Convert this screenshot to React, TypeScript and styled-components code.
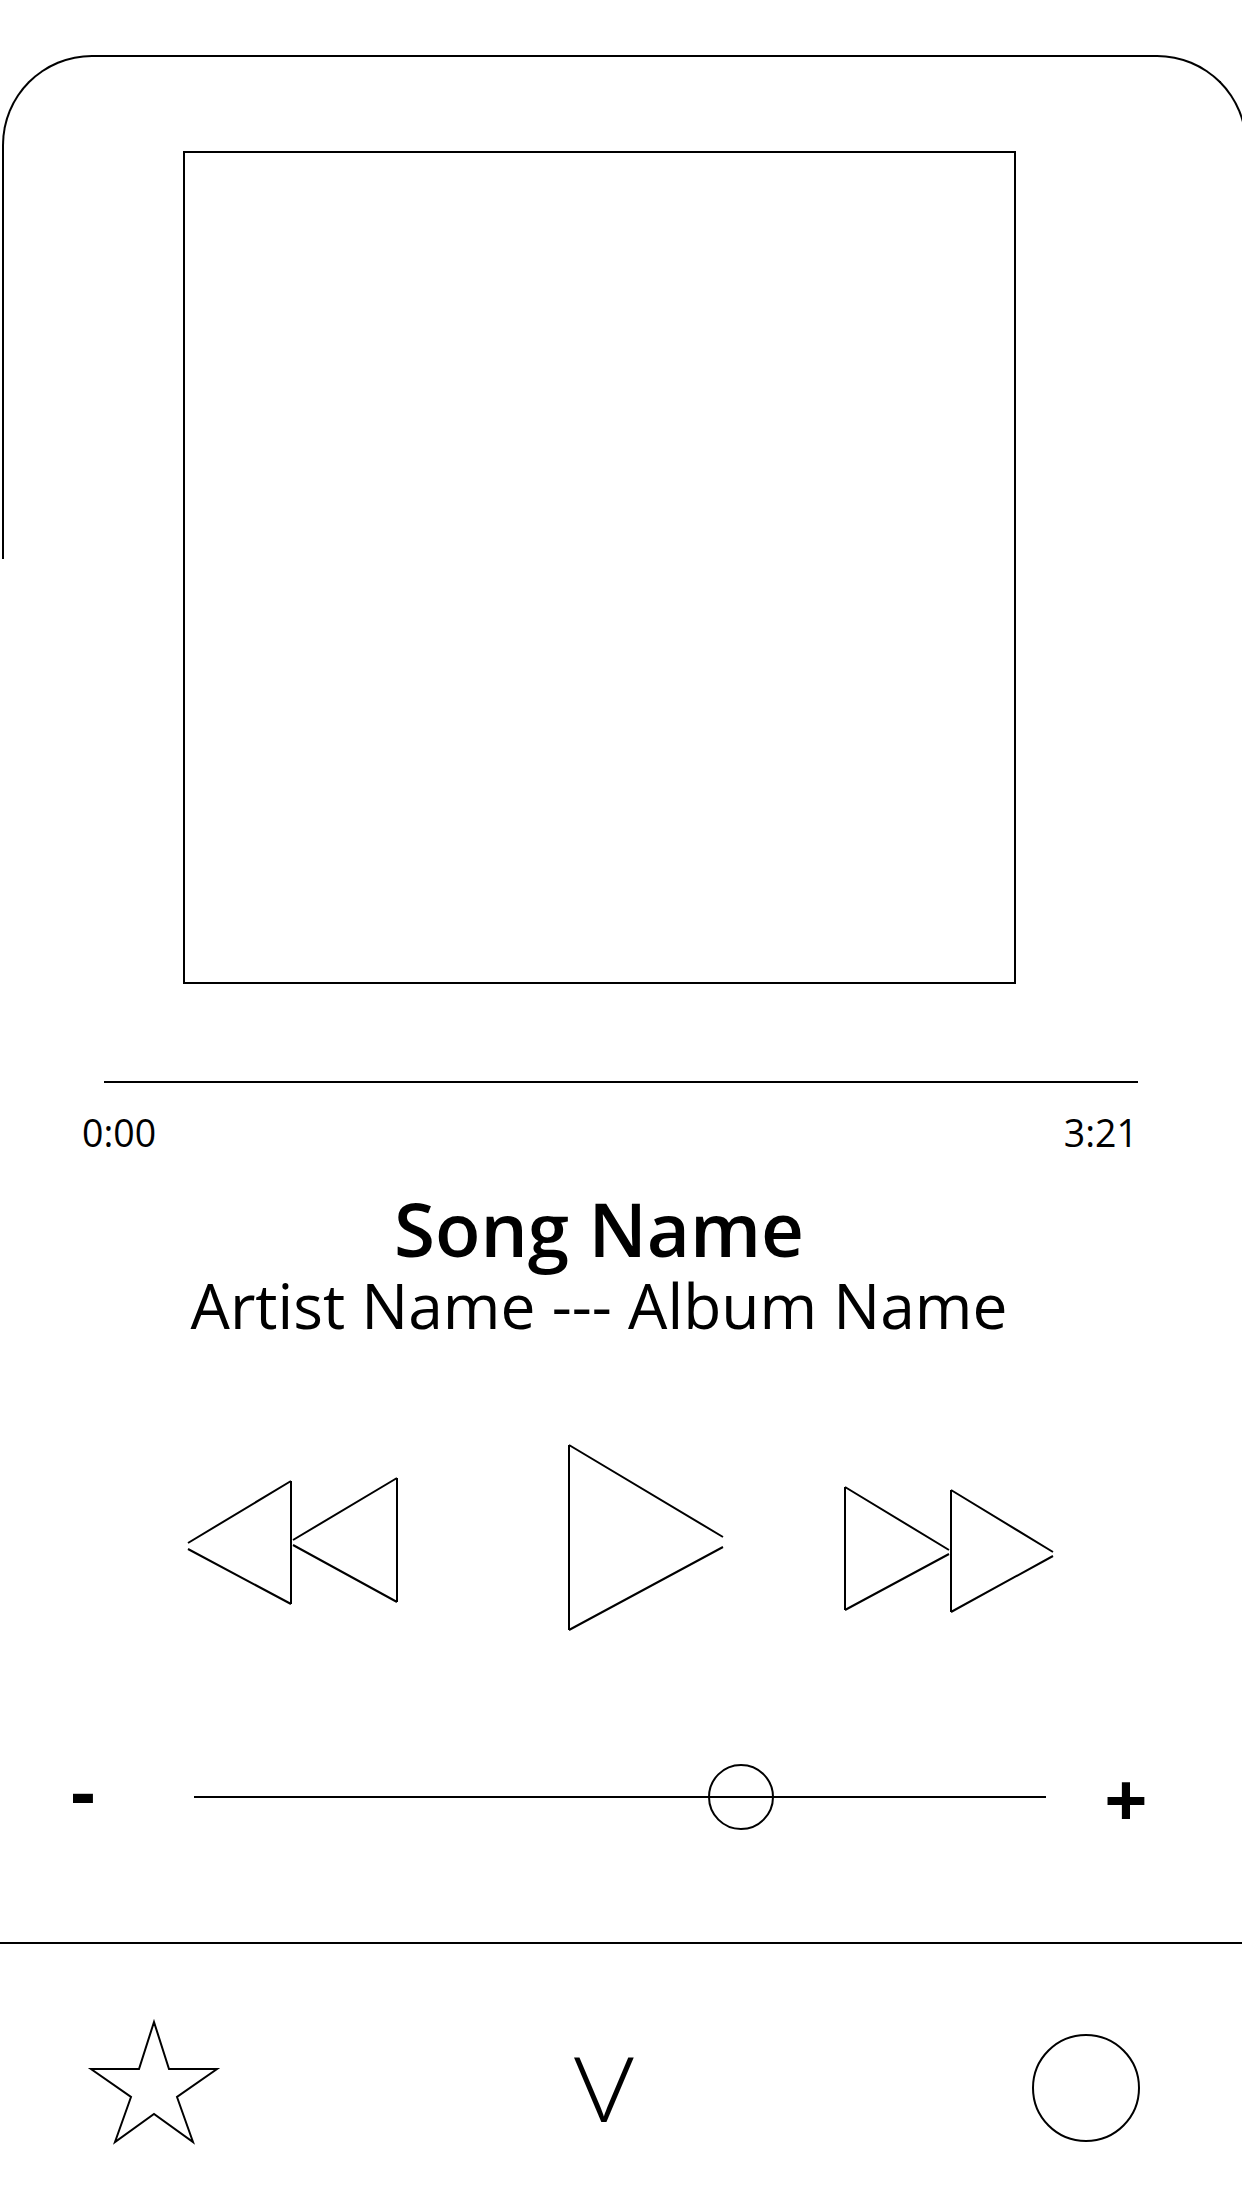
import React from "react";
import styled, { createGlobalStyle } from "styled-components";

const GlobalStyle = createGlobalStyle`
  html, body {
    margin: 0;
    padding: 0;
    background: #ffffff;
    overflow: hidden;
  }
  body {
    font-family: "Open Sans", "Noto Sans", sans-serif;
    color: #000;
  }
`;

const Page = styled.div`
  position: relative;
  width: 1242px;
  height: 2208px;
  overflow: hidden;
  display: flex;
  flex-direction: column;
  background: #fff;

  &::before {
    content: "";
    position: absolute;
    left: 2px;
    top: 55px;
    width: 1245px;
    height: 504px;
    box-sizing: border-box;
    border: 2px solid #000;
    border-bottom: none;
    border-radius: 90px 90px 0 0;
    pointer-events: none;
  }
`;

const AlbumArt = styled.div`
  box-sizing: border-box;
  width: 833px;
  height: 833px;
  margin: 151px 0 0 183px;
  border: 2px solid #000;
  background: #fff;
  position: relative;
`;

const ProgressTrack = styled.div`
  height: 2px;
  margin: 97px 104px 0 104px;
  background: #000;
`;

const TimeRow = styled.div`
  display: flex;
  justify-content: space-between;
  padding: 0 104px 0 82px;
  margin-top: 26px;
  font-size: 37.5px;
  line-height: 48px;
  font-weight: 400;
`;

const Info = styled.div`
  display: flex;
  flex-direction: column;
  align-items: center;
  padding-right: 44px;
  margin-top: 31px;
`;

const SongTitle = styled.div`
  font-size: 74.5px;
  line-height: 80px;
  font-weight: 600;
`;

const Subtitle = styled.div`
  font-size: 62.3px;
  line-height: 73px;
  font-weight: 400;
  white-space: nowrap;
`;

const Controls = styled.div`
  display: flex;
  align-items: flex-start;
  padding-left: 187px;
  margin-top: 104px;
`;

const ControlIcon = styled.svg<{ $top: number; $gap: number }>`
  display: block;
  overflow: visible;
  margin-top: ${(p) => p.$top}px;
  margin-left: ${(p) => p.$gap}px;
  flex: none;
`;

const VolumeRow = styled.div`
  display: flex;
  align-items: center;
  height: 70px;
  margin-top: 132px;
`;

const VolumeSign = styled.div<{ $width: number; $shift: number }>`
  width: ${(p) => p.$width}px;
  flex: none;
  text-align: center;
  font-size: 76px;
  font-weight: 700;
  line-height: 70px;
  position: relative;
  top: ${(p) => p.$shift}px;
`;

const VolumeTrack = styled.div`
  position: relative;
  width: 852px;
  height: 2px;
  margin-left: 28px;
  background: #000;
  flex: none;
`;

const Thumb = styled.div`
  position: absolute;
  top: 50%;
  width: 66px;
  height: 66px;
  box-sizing: border-box;
  border: 2px solid #000;
  border-radius: 50%;
  transform: translate(-50%, -50%);
  background: transparent;
`;

const Divider = styled.div`
  height: 2px;
  background: #000;
  margin-top: 110px;
`;

const NavRow = styled.div`
  display: flex;
  align-items: flex-start;
  padding-left: 91px;
`;

const NavStar = styled.svg`
  display: block;
  overflow: visible;
  flex: none;
  margin-top: 78px;
`;

const NavLabel = styled.div`
  width: 120px;
  margin-left: 327px;
  margin-top: 99px;
  text-align: center;
  font-size: 90px;
  line-height: 88px;
  font-weight: 300;
  transform: scaleX(1.15);
  flex: none;
`;

const NavCircle = styled.div`
  width: 108px;
  height: 108px;
  box-sizing: border-box;
  border: 2px solid #000;
  border-radius: 50%;
  margin-left: 368px;
  margin-top: 90px;
  flex: none;
`;

const stroke = { fill: "none", stroke: "#000", strokeWidth: 2 } as const;

export default function App() {
  const volume = 0.642;
  return (
    <>
      <GlobalStyle />
      <Page>
        <AlbumArt />
        <ProgressTrack />
        <TimeRow>
          <span>0:00</span>
          <span>3:21</span>
        </TimeRow>
        <Info>
          <SongTitle>Song Name</SongTitle>
          <Subtitle>Artist Name --- Album Name</Subtitle>
        </Info>
        <Controls>
          <ControlIcon $top={33} $gap={0} width={210} height={126} viewBox="0 0 210 126">
            <path {...stroke} d="M104 3 L104 126 M104 3 L1 65 M1 71 L104 126" />
            <path {...stroke} d="M210 0 L210 124 M210 0 L106 62 M106 67 L210 124" />
          </ControlIcon>
          <ControlIcon $top={0} $gap={172} width={154} height={185} viewBox="0 0 154 185">
            <path {...stroke} d="M0 0 L0 185 M0 0 L154 92 M154 102 L0 185" />
          </ControlIcon>
          <ControlIcon $top={42} $gap={122} width={208} height={125} viewBox="0 0 208 125">
            <path {...stroke} d="M0 0 L0 123 M0 0 L104 63 M104 67 L0 123" />
            <path {...stroke} d="M106 3 L106 125 M106 3 L208 65 M208 69 L106 125" />
          </ControlIcon>
        </Controls>
        <VolumeRow>
          <VolumeSign $width={166} $shift={-7}>-</VolumeSign>
          <VolumeTrack>
            <Thumb style={{ left: `${volume * 100}%` }} />
          </VolumeTrack>
          <VolumeSign $width={160} $shift={1}>+</VolumeSign>
        </VolumeRow>
        <Divider />
        <NavRow>
          <NavStar width={126} height={121} viewBox="0 0 126 121">
            <polygon
              {...stroke}
              strokeLinejoin="miter"
              points="63,0 78,47 126,47 86,75 102,120 63,92 24,120 40,75 0,47 48,47"
            />
          </NavStar>
          <NavLabel>V</NavLabel>
          <NavCircle />
        </NavRow>
      </Page>
    </>
  );
}
